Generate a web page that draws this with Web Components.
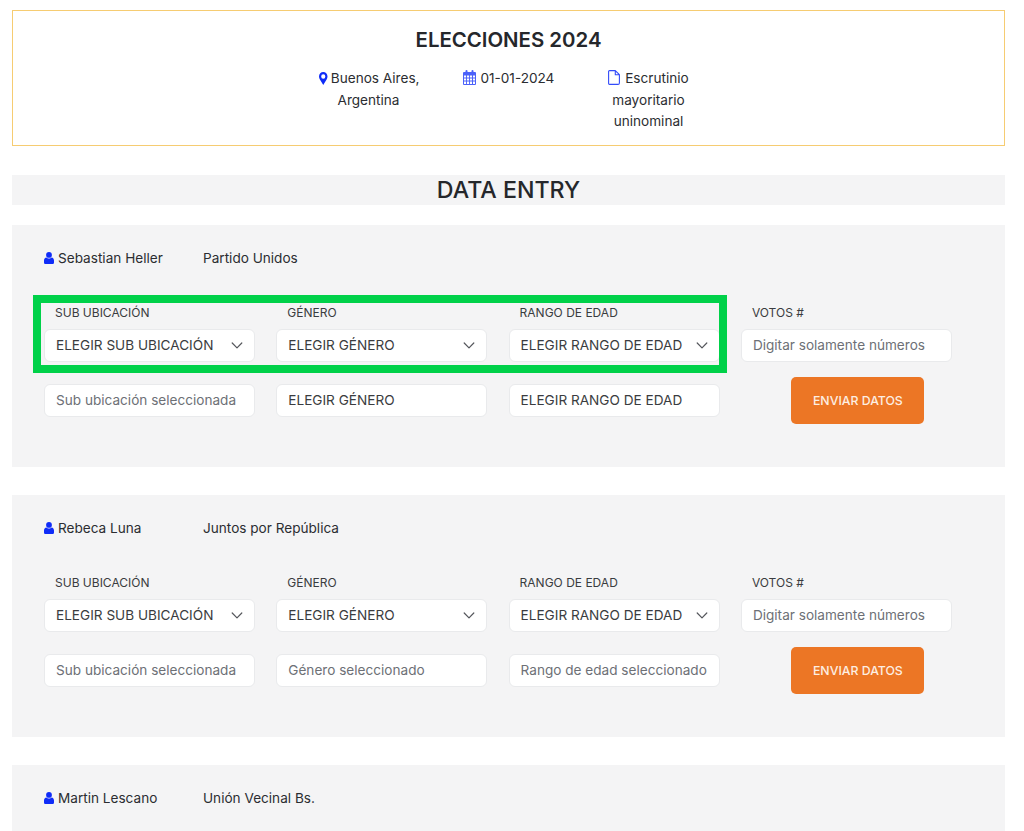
<!DOCTYPE html>
<html lang="es">
<head>
<meta charset="utf-8">
<title>Elecciones 2024</title>
<style>
  html, body { height: 100%; overflow: hidden; }
  body {
    margin: 0;
    padding: 10px 19px 0 12px;
    box-sizing: border-box;
    background: #fff;
    color: #2b2d31;
    font: 13.6px/21px Inter, "Liberation Sans", sans-serif;
  }
</style>
</head>
<body>
<election-header title="ELECCIONES 2024">
  <meta-item icon="pin">Buenos Aires, Argentina</meta-item>
  <meta-item icon="calendar">01-01-2024</meta-item>
  <meta-item icon="file">Escrutinio mayoritario uninominal</meta-item>
</election-header>
<page-title>DATA ENTRY</page-title>
<candidate-card name="Sebastian Heller" party="Partido Unidos" highlight>
  <field-label>SUB UBICACIÓN</field-label>
  <field-label>GÉNERO</field-label>
  <field-label>RANGO DE EDAD</field-label>
  <field-label>VOTOS #</field-label>
  <select-box>ELEGIR SUB UBICACIÓN</select-box>
  <select-box>ELEGIR GÉNERO</select-box>
  <select-box>ELEGIR RANGO DE EDAD</select-box>
  <text-box placeholder>Digitar solamente números</text-box>
  <text-box offset placeholder>Sub ubicación seleccionada</text-box>
  <text-box offset>ELEGIR GÉNERO</text-box>
  <text-box offset>ELEGIR RANGO DE EDAD</text-box>
  <send-button>ENVIAR DATOS</send-button>
</candidate-card>
<candidate-card name="Rebeca Luna" party="Juntos por República">
  <field-label>SUB UBICACIÓN</field-label>
  <field-label>GÉNERO</field-label>
  <field-label>RANGO DE EDAD</field-label>
  <field-label>VOTOS #</field-label>
  <select-box>ELEGIR SUB UBICACIÓN</select-box>
  <select-box>ELEGIR GÉNERO</select-box>
  <select-box>ELEGIR RANGO DE EDAD</select-box>
  <text-box placeholder>Digitar solamente números</text-box>
  <text-box offset placeholder>Sub ubicación seleccionada</text-box>
  <text-box offset placeholder>Género seleccionado</text-box>
  <text-box offset placeholder>Rango de edad seleccionado</text-box>
  <send-button>ENVIAR DATOS</send-button>
</candidate-card>
<candidate-card name="Martin Lescano" party="Unión Vecinal Bs."></candidate-card>

<script>
const BLUE = '#0f2cf8';
const ICONS = {
  pin: `<svg width="8.500" height="13" viewBox="0 0 9 13" preserveAspectRatio="none"><path fill="${BLUE}" fill-rule="evenodd" d="M4.500 0C2 0 0 2 0 4.500 0 5.600.4 6.400.8 7.200L4.500 13l3.700-5.800C8.600 6.400 9 5.600 9 4.500 9 2 7 0 4.500 0zm0 2.300a2.200 2.200 0 1 1 0 4.400 2.200 2.200 0 0 1 0-4.400z"/></svg>`,
  calendar: `<svg width="13" height="15" viewBox="0 0 13 15"><path fill="${BLUE}" opacity=".75" fill-rule="evenodd" d="M1 2h1.500V1a1 1 0 0 1 2 0v1h4V1a1 1 0 0 1 2 0v1H12a1 1 0 0 1 1 1v11a1 1 0 0 1-1 1H1a1 1 0 0 1-1-1V3a1 1 0 0 1 1-1zm0 3.500v2h2.100v-2zm3 0v2h2.100v-2zm3 0v2H9v-2zm3 0v2H12v-2zM1 8.500v2h2.100v-2zm3 0v2h2.100v-2zm3 0v2H9v-2zm3 0v2H12v-2zM1 11.500V14h2.100v-2.500zm3 0V14h2.100v-2.500zm3 0V14H9v-2.500zm3 0V14H12v-2.500z"/></svg>`,
  file: `<svg width="12" height="15" viewBox="0 0 12 15"><path fill="none" stroke="${BLUE}" stroke-opacity=".85" stroke-width="1.100" stroke-linejoin="round" d="M1.500.6h5.800l4.100 4.100V13a1.400 1.400 0 0 1-1.400 1.400H1.500A1 1 0 0 1 .6 13.400V1.500a.9.900 0 0 1 .9-.9zM7.300.6v4.100h4.100"/></svg>`,
  user: `<svg width="10" height="12" viewBox="0 0 10 12"><circle cx="5" cy="2.900" r="2.900" fill="${BLUE}"/><path fill="${BLUE}" d="M2.400 5.400C3 6 4 6.400 5 6.400s2-.4 2.600-1c1.500.2 2.400 1.300 2.400 3.200v1.900c0 1-.8 1.500-1.500 1.500h-7C.8 12 0 11.500 0 10.500V8.600c0-1.900.9-3 2.400-3.200z"/></svg>`,
  chevron: `<svg width="12" height="7" viewBox="0 0 12 7"><path fill="none" stroke="#55575c" stroke-width="1.200" stroke-linecap="round" stroke-linejoin="round" d="M1.200 1l4.800 4.800L10.800 1"/></svg>`
};

class ElectionHeader extends HTMLElement {
  constructor() {
    super();
    this.attachShadow({ mode: 'open' });
  }
  connectedCallback() {
    this.shadowRoot.innerHTML = `
    <style>
      :host {
        display: block;
        box-sizing: border-box;
        height: 136px;
        border: 1.500px solid #f6cc72;
        padding-top: 15px;
      }
      h1 {
        margin: 0 0 14px;
        font-size: 20.400px;
        line-height: 28px;
        font-weight: 600;
        text-align: center;
        color: #25272b;
      }
      div { display: grid; grid-template-columns: repeat(3, 140px); justify-content: center; }
    </style>
    <h1>${this.getAttribute('title')}</h1>
    <div><slot></slot></div>
    `;
  }
}
customElements.define('election-header', ElectionHeader);

class MetaItem extends HTMLElement {
  constructor() {
    super();
    this.attachShadow({ mode: 'open' });
  }
  connectedCallback() {
    this.shadowRoot.innerHTML = `
    <style>
      :host { display: block; padding: 0 16px; text-align: center; line-height: 21.500px; }
      svg { vertical-align: -2px; margin-right: 1px; }
      :host([icon="pin"]) svg { margin: 0 -1px 0 2px; }
    </style>
    ${ICONS[this.getAttribute('icon')]} <slot></slot>
    `;
  }
}
customElements.define('meta-item', MetaItem);

class PageTitle extends HTMLElement {
  constructor() {
    super();
    this.attachShadow({ mode: 'open' });
  }
  connectedCallback() {
    this.shadowRoot.innerHTML = `
    <style>
      :host {
        display: block;
        margin: 29px 0 20px;
        background: #f4f4f5;
        font-size: 23.200px;
        line-height: 30px;
        font-weight: 500;
        text-align: center;
        color: #25272b;
      }
    </style>
    <slot></slot>
    `;
  }
}
customElements.define('page-title', PageTitle);

class CandidateCard extends HTMLElement {
  constructor() {
    super();
    this.attachShadow({ mode: 'open' });
  }
  connectedCallback() {
    const mark = this.hasAttribute('highlight') ? '<div class="mark"></div>' : '';
    this.shadowRoot.innerHTML = `
    <style>
      :host {
        display: block;
        position: relative;
        min-height: 242px;
        margin-bottom: 28px;
        box-sizing: border-box;
        background: #f4f4f5;
        padding: 23px 32px 43px;
      }
      header { display: flex; height: 21px; margin-bottom: 34px; }
      header span:first-child { width: 159px; }
      svg { vertical-align: -1px; margin-right: 4px; }
      .grid {
        display: grid;
        grid-template-columns: repeat(4, 211px);
        column-gap: 21.300px;
        row-gap: 8px;
      }
      .mark {
        position: absolute;
        left: 20.500px; top: 70px;
        width: 694px; height: 78px;
        box-sizing: border-box;
        border: 8px solid #00d149;
      }
    </style>
    <header>
      <span>${ICONS.user}${this.getAttribute('name')}</span>
      <span>${this.getAttribute('party')}</span>
    </header>
    <div class="grid"><slot></slot></div>
    ${mark}
    `;
  }
}
customElements.define('candidate-card', CandidateCard);

class FieldLabel extends HTMLElement {
  constructor() {
    super();
    this.attachShadow({ mode: 'open' });
  }
  connectedCallback() {
    this.shadowRoot.innerHTML = `
    <style>
      :host { display: block; height: 18px; padding-left: 11px; font-size: 12px; line-height: 20px; color: #3a3c40; }
    </style>
    <slot></slot>
    `;
  }
}
customElements.define('field-label', FieldLabel);

// select and text box share the same white pill
const BOX_CSS = `
  box-sizing: border-box;
  height: 33px;
  padding: 0 11px;
  background: #fff;
  border: 1px solid #e9eaec;
  border-radius: 6px;
  line-height: 31px;
  color: #3a3c40;
  white-space: nowrap;
`;

class SelectBox extends HTMLElement {
  constructor() {
    super();
    this.attachShadow({ mode: 'open' });
  }
  connectedCallback() {
    this.shadowRoot.innerHTML = `
    <style>
      :host { display: flex; justify-content: space-between; align-items: center; ${BOX_CSS} }
      svg { flex: none; }
    </style>
    <slot></slot>${ICONS.chevron}
    `;
  }
}
customElements.define('select-box', SelectBox);

class TextBox extends HTMLElement {
  constructor() {
    super();
    this.attachShadow({ mode: 'open' });
  }
  connectedCallback() {
    this.shadowRoot.innerHTML = `
    <style>
      :host { display: block; ${BOX_CSS} }
      :host([placeholder]) { color: #6d7076; }
      :host([offset]) { margin-top: 14px; }
    </style>
    <slot></slot>
    `;
  }
}
customElements.define('text-box', TextBox);

class SendButton extends HTMLElement {
  constructor() {
    super();
    this.attachShadow({ mode: 'open' });
  }
  connectedCallback() {
    this.shadowRoot.innerHTML = `
    <style>
      :host {
        display: block;
        justify-self: center;
        box-sizing: border-box;
        width: 133px;
        height: 47px;
        margin: 7px 0 0 23px;
        background: #ec7625;
        border-radius: 5px;
        color: #fdeee2;
        font-size: 12.300px;
        font-weight: 500;
        line-height: 47px;
        text-align: center;
      }
    </style>
    <slot></slot>
    `;
  }
}
customElements.define('send-button', SendButton);
</script>
</body>
</html>
